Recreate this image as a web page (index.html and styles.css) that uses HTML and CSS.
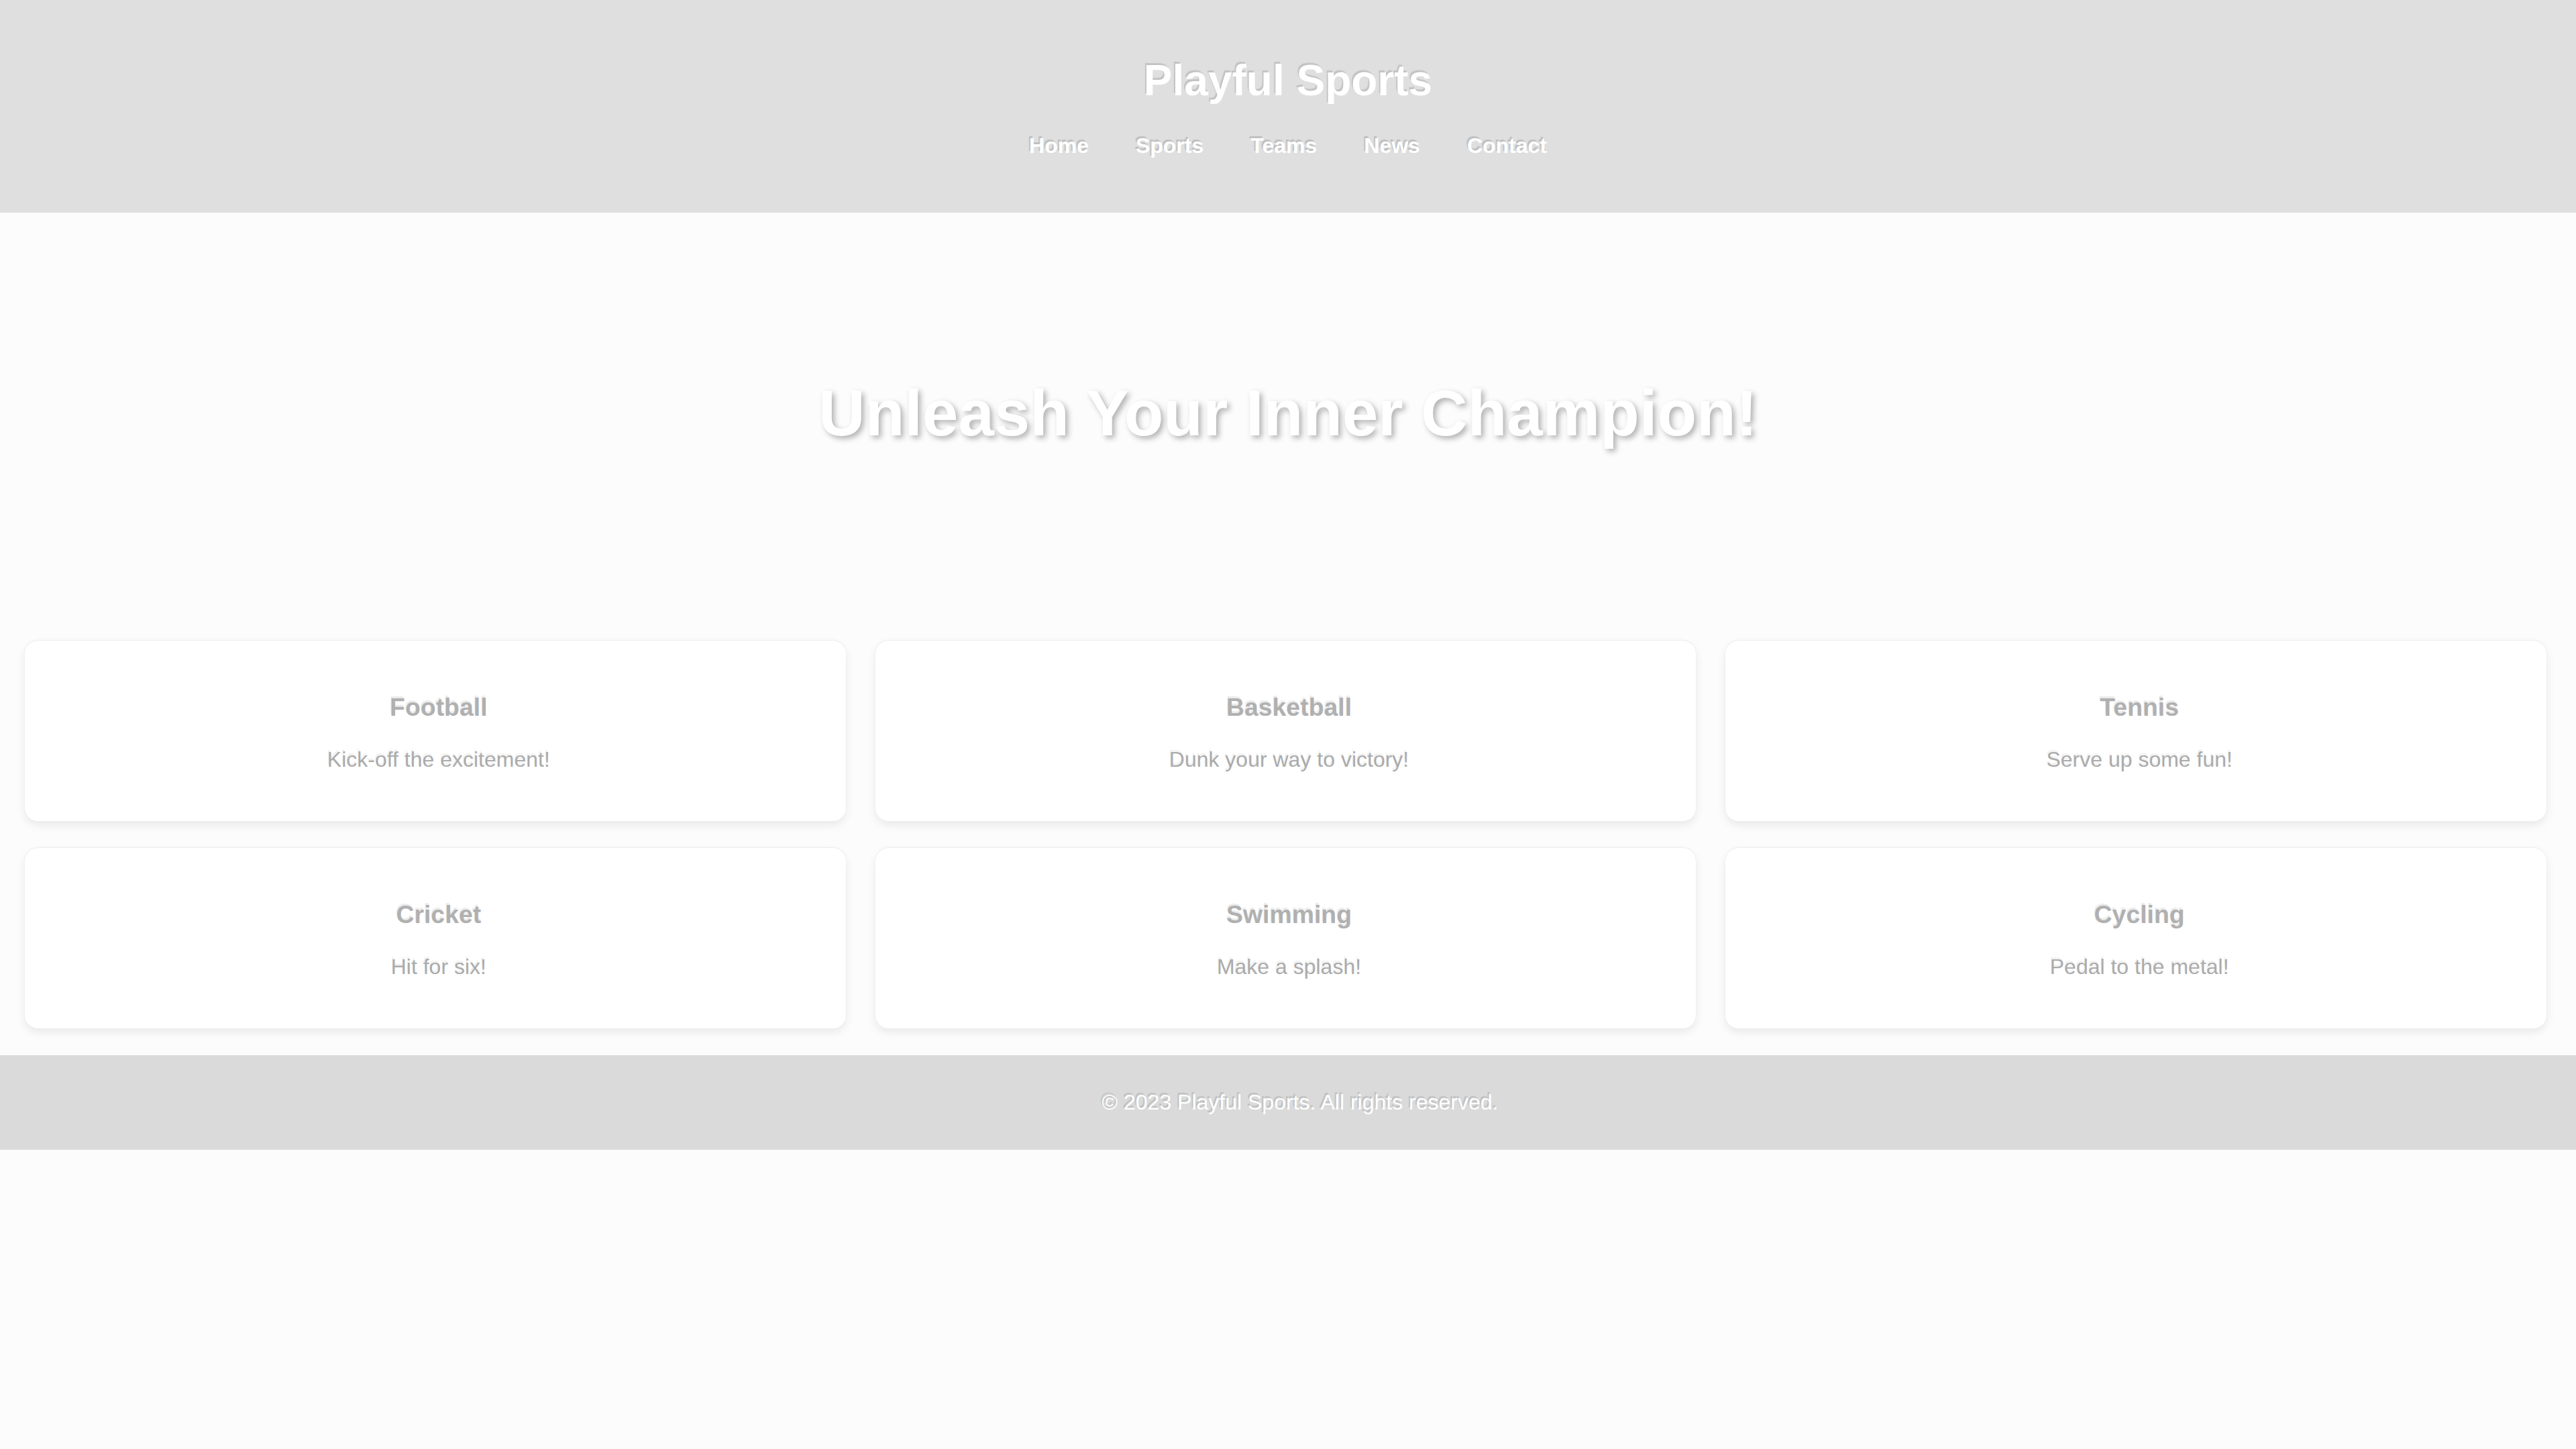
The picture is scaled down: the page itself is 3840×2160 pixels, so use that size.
FILE: index.html
```html
<!DOCTYPE html>
<html lang="en">
<head>
<meta charset="utf-8">
<title>Playful Sports</title>
<link rel="stylesheet" href="styles.css">
</head>
<body>
<header class="site-header">
  <h1 class="brand">Playful Sports</h1>
  <nav class="nav">
    <a href="#" class="nav-link">Home</a>
    <a href="#" class="nav-link">Sports</a>
    <a href="#" class="nav-link">Teams</a>
    <a href="#" class="nav-link">News</a>
    <a href="#" class="nav-link">Contact</a>
  </nav>
</header>
<section class="hero">
  <h1 class="hero-title">Unleash Your Inner Champion!</h1>
</section>
<section class="cards">
  <div class="card"><h3>Football</h3><p>Kick-off the excitement!</p></div>
  <div class="card"><h3>Basketball</h3><p>Dunk your way to victory!</p></div>
  <div class="card"><h3>Tennis</h3><p>Serve up some fun!</p></div>
  <div class="card"><h3>Cricket</h3><p>Hit for six!</p></div>
  <div class="card"><h3>Swimming</h3><p>Make a splash!</p></div>
  <div class="card"><h3>Cycling</h3><p>Pedal to the metal!</p></div>
</section>
<footer class="site-footer">
  <p>&copy; 2023 Playful Sports. All rights reserved.</p>
</footer>
</body>
</html>
```
FILE: styles.css
```css
html, body {
  margin: 0;
  padding: 0;
}
body {
  background: #fcfcfc;
  font-family: "Liberation Sans", Arial, sans-serif;
  font-size: 32px;
  color: #aaaaaa;
}
.site-header {
  background: #dfdfdf;
  padding: 83px 0 81px;
  text-align: center;
}
.brand {
  margin: 0 0 42px;
  font-size: 64px;
  font-weight: bold;
  color: #ffffff;
  text-shadow: -2px -3px 1px rgba(0, 0, 0, 0.12);
}
.nav {
  display: flex;
  justify-content: center;
  gap: 70px;
}
.nav-link {
  color: #ffffff;
  font-weight: bold;
  font-size: 32px;
  text-decoration: none;
  text-shadow: -2px -3px 1px rgba(0, 0, 0, 0.14);
}
.hero {
  padding: 244px 40px;
  text-align: center;
}
.hero-title {
  margin: 0;
  font-size: 96px;
  font-weight: bold;
  color: #ffffff;
  text-shadow: 4px 4px 8px rgba(0, 0, 0, 0.3);
}
.cards {
  display: grid;
  grid-template-columns: repeat(3, 1fr);
  gap: 40px 44px;
  padding: 40px 44px 40px 37px;
}
.card {
  background: #ffffff;
  border-radius: 20px;
  padding: 41px 35px 41px 45px;
  text-align: center;
  box-shadow: 0 6px 14px rgba(0, 0, 0, 0.08), 0 -1px 2px rgba(0, 0, 0, 0.06);
}
.card h3 {
  font-size: 37.44px;
  margin: 37.44px 0;
  color: #b0b0b0;
  text-shadow: -1px -3px 1px rgba(0, 0, 0, 0.08);
}
.card p {
  margin: 32px 0;
  color: #ababab;
  text-shadow: -1px -3px 1px rgba(0, 0, 0, 0.06);
}
.site-footer {
  background: #dadada;
  padding: 52px 0 52px 36px;
  text-align: center;
}
.site-footer p {
  margin: 0;
  color: #ffffff;
  text-shadow: -2px -3px 1px rgba(0, 0, 0, 0.12);
}
```
